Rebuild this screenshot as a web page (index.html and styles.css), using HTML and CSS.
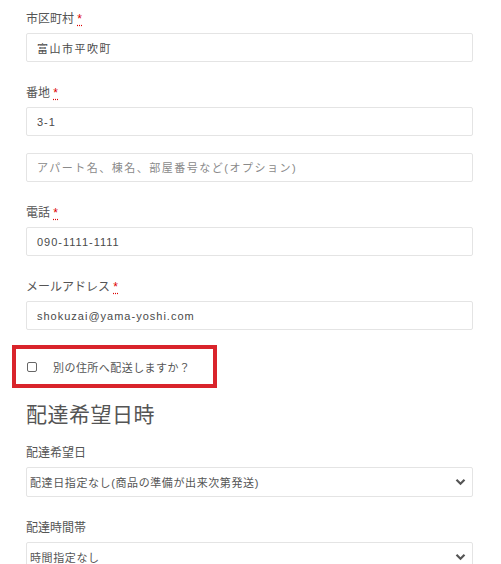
FILE: index.html
```html
<!DOCTYPE html>
<html lang="ja">
<head>
<meta charset="utf-8">
<link rel="stylesheet" href="styles.css">
</head>
<body>
<form class="form">
  <div class="field">
    <label class="label">市区町村 <abbr class="req" title="必須">*</abbr></label>
    <input class="input" type="text" value="富山市平吹町">
  </div>
  <div class="field field-tight">
    <label class="label">番地 <abbr class="req" title="必須">*</abbr></label>
    <input class="input input-num" type="text" value="3-1">
  </div>
  <div class="field">
    <input class="input" type="text" placeholder="アパート名、棟名、部屋番号など(オプション)">
  </div>
  <div class="field">
    <label class="label">電話 <abbr class="req" title="必須">*</abbr></label>
    <input class="input input-num" type="text" value="090-1111-1111">
  </div>
  <div class="field">
    <label class="label">メールアドレス <abbr class="req" title="必須">*</abbr></label>
    <input class="input input-latin" type="text" value="shokuzai@yama-yoshi.com">
  </div>
  <div class="ship-box">
    <label class="ship-label"><input class="check" type="checkbox"><span>別の住所へ配送しますか？</span></label>
  </div>
  <h3 class="heading">配達希望日時</h3>
  <div class="field">
    <label class="label">配達希望日</label>
    <div class="select">
      <span>配達日指定なし(商品の準備が出来次第発送)</span>
      <svg class="chev" width="11" height="8" viewBox="0 0 11 8"><path d="M1.5 1.8 L5.5 5.8 L9.5 1.8" fill="none" stroke="#555" stroke-width="2.2"/></svg>
    </div>
  </div>
  <div class="field">
    <label class="label">配達時間帯</label>
    <div class="select">
      <span>時間指定なし</span>
      <svg class="chev" width="11" height="8" viewBox="0 0 11 8"><path d="M1.5 1.8 L5.5 5.8 L9.5 1.8" fill="none" stroke="#555" stroke-width="2.2"/></svg>
    </div>
  </div>
</form>
</body>
</html>
```
FILE: styles.css
```css
html, body {
  margin: 0;
  padding: 0;
  background: #fff;
}
body {
  font-family: "Liberation Sans", "Noto Sans CJK JP", sans-serif;
  color: #555;
}
.form {
  padding: 9px 28px 0 26px;
  display: flex;
  flex-direction: column;
}
.field {
  display: flex;
  flex-direction: column;
  margin-bottom: 21px;
}
.field-tight {
  margin-bottom: 17px;
}
.label {
  font-size: 12px;
  line-height: 20px;
  height: 20px;
  margin-bottom: 4px;
  color: #555;
}
.req {
  color: #d00;
  text-decoration: underline dotted #d00;
  text-underline-offset: 2px;
  cursor: help;
}
.input {
  box-sizing: border-box;
  height: 29px;
  width: 100%;
  margin: 0;
  border: 1px solid #e4e4e4;
  border-radius: 2px;
  padding: 0 10px;
  font-family: "Liberation Sans", "Noto Sans CJK JP", sans-serif;
  font-size: 11px;
  letter-spacing: 1.5px;
  color: #4a4a4a;
  background: #fff;
  outline: none;
}
.input-num {
  letter-spacing: 1px;
}
.input-latin {
  letter-spacing: 1px;
}
.input::placeholder {
  color: #8a8a8a;
}
.ship-box {
  box-sizing: border-box;
  align-self: flex-start;
  margin: -6px 0 0 -14px;
  width: 205px;
  height: 43px;
  border: 4px solid #d9242b;
  display: flex;
  align-items: center;
  padding-left: 11px;
}
.ship-label {
  display: flex;
  align-items: center;
  gap: 16px;
  font-size: 11px;
  letter-spacing: 0.45px;
  color: #555;
}
.check {
  appearance: none;
  -webkit-appearance: none;
  margin: 0;
  width: 10px;
  height: 10px;
  border: 1px solid #666;
  border-radius: 2px;
  background: #fff;
}
.heading {
  margin: 12px 0 13px;
  font-size: 21px;
  font-weight: normal;
  line-height: 30px;
  color: #555;
  letter-spacing: 0.5px;
}
.select {
  box-sizing: border-box;
  height: 30px;
  border: 1px solid #e4e4e4;
  border-radius: 2px;
  display: flex;
  align-items: center;
  justify-content: space-between;
  padding: 0 6px 0 3px;
  font-size: 11px;
  letter-spacing: 0.6px;
  color: #555;
}
.chev {
  display: block;
}
```
